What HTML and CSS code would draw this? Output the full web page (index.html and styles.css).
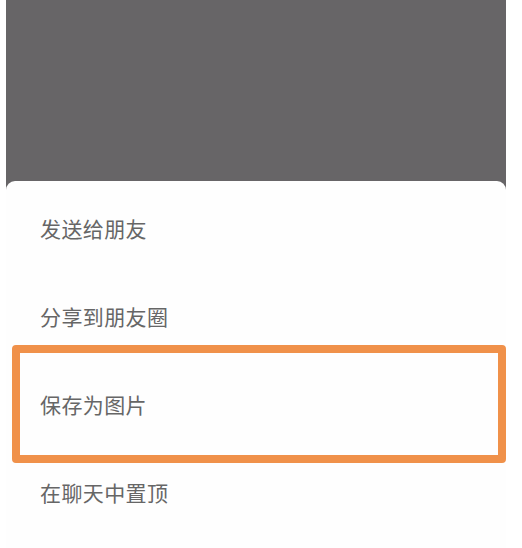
FILE: index.html
```html
<!DOCTYPE html>
<html lang="zh-CN">
<head>
  <meta charset="UTF-8" />
  <meta name="viewport" content="width=device-width, initial-scale=1.0"/>
  <title>分享菜单</title>
  <link rel="stylesheet" href="styles.css">
</head>
<body>
  <div class="screen">
    <div class="mask"></div>

    <div class="sheet">
      <div class="sheet-item">发送给朋友</div>
      <div class="sheet-item">分享到朋友圈</div>
      <div class="sheet-item is-marked">
        保存为图片
        <div class="highlight"></div>
      </div>
      <div class="sheet-item">在聊天中置顶</div>
    </div>
  </div>
</body>
</html>
```

FILE: styles.css
```css
* {
  margin: 0;
  padding: 0;
  box-sizing: border-box;
}

body {
  font-family: "Noto Sans CJK SC", "Noto Sans", sans-serif;
  background-color: #fff;
  width: 522px;
  height: 548px;
  overflow: hidden;
}

.screen {
  margin: 0 16px 0 6px;
  height: 548px;
  display: flex;
  flex-direction: column;
  background-color: #676567;
}

.mask {
  height: 181px;
  flex-shrink: 0;
}

.sheet {
  flex: 1;
  background-color: #fefefe;
  border-radius: 9px 9px 0 0;
  padding-top: 3px;
}

.sheet-item {
  position: relative;
  height: 88px;
  display: flex;
  align-items: center;
  padding-left: 34px;
  font-size: 21px;
  color: #666;
  letter-spacing: 0.4px;
}

.highlight {
  position: absolute;
  top: -15px;
  bottom: -15px;
  left: 6px;
  right: 0;
  border: 8px solid #f0914a;
  border-radius: 4px;
  pointer-events: none;
}
```
